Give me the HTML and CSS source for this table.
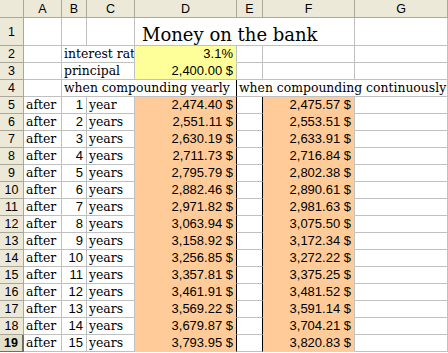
FILE: index.html
```html
<!DOCTYPE html>
<html>
<head>
<meta charset="utf-8">
<link rel="stylesheet" href="styles.css">
</head>
<body>
<div class="sheet">
  <div class="hd corner"></div><div class="hd">A</div><div class="hd">B</div><div class="hd">C</div><div class="hd">D</div><div class="hd">E</div><div class="hd">F</div><div class="hd">G</div>

  <div class="rh">1</div><div class="c"></div><div class="c"></div><div class="c"></div><div class="c title span3">Money on the bank</div><div class="c"></div>

  <div class="rh">2</div><div class="c"></div><div class="c t span2">interest rat</div><div class="c n yel top">3.1%</div><div class="c"></div><div class="c"></div><div class="c"></div>

  <div class="rh">3</div><div class="c"></div><div class="c t span2">principal</div><div class="c n yel">2,400.00 $</div><div class="c"></div><div class="c"></div><div class="c"></div>

  <div class="rh">4</div><div class="c"></div><div class="c t span3 bk">when compounding yearly</div><div class="c t span3 vis">when compounding continuously</div>

  <div class="rh">5</div><div class="c t">after</div><div class="c n">1</div><div class="c t">year</div><div class="c n org bk">2,474.40 $</div><div class="c bk"></div><div class="c n org">2,475.57 $</div><div class="c"></div>
  <div class="rh">6</div><div class="c t">after</div><div class="c n">2</div><div class="c t">years</div><div class="c n org bk">2,551.11 $</div><div class="c bk"></div><div class="c n org">2,553.51 $</div><div class="c"></div>
  <div class="rh">7</div><div class="c t">after</div><div class="c n">3</div><div class="c t">years</div><div class="c n org bk">2,630.19 $</div><div class="c bk"></div><div class="c n org">2,633.91 $</div><div class="c"></div>
  <div class="rh">8</div><div class="c t">after</div><div class="c n">4</div><div class="c t">years</div><div class="c n org bk">2,711.73 $</div><div class="c bk"></div><div class="c n org">2,716.84 $</div><div class="c"></div>
  <div class="rh">9</div><div class="c t">after</div><div class="c n">5</div><div class="c t">years</div><div class="c n org bk">2,795.79 $</div><div class="c bk"></div><div class="c n org">2,802.38 $</div><div class="c"></div>
  <div class="rh">10</div><div class="c t">after</div><div class="c n">6</div><div class="c t">years</div><div class="c n org bk">2,882.46 $</div><div class="c bk"></div><div class="c n org">2,890.61 $</div><div class="c"></div>
  <div class="rh">11</div><div class="c t">after</div><div class="c n">7</div><div class="c t">years</div><div class="c n org bk">2,971.82 $</div><div class="c bk"></div><div class="c n org">2,981.63 $</div><div class="c"></div>
  <div class="rh">12</div><div class="c t">after</div><div class="c n">8</div><div class="c t">years</div><div class="c n org bk">3,063.94 $</div><div class="c bk"></div><div class="c n org">3,075.50 $</div><div class="c"></div>
  <div class="rh">13</div><div class="c t">after</div><div class="c n">9</div><div class="c t">years</div><div class="c n org bk">3,158.92 $</div><div class="c bk"></div><div class="c n org">3,172.34 $</div><div class="c"></div>
  <div class="rh">14</div><div class="c t">after</div><div class="c n">10</div><div class="c t">years</div><div class="c n org bk">3,256.85 $</div><div class="c bk"></div><div class="c n org">3,272.22 $</div><div class="c"></div>
  <div class="rh">15</div><div class="c t">after</div><div class="c n">11</div><div class="c t">years</div><div class="c n org bk">3,357.81 $</div><div class="c bk"></div><div class="c n org">3,375.25 $</div><div class="c"></div>
  <div class="rh">16</div><div class="c t">after</div><div class="c n">12</div><div class="c t">years</div><div class="c n org bk">3,461.91 $</div><div class="c bk"></div><div class="c n org">3,481.52 $</div><div class="c"></div>
  <div class="rh">17</div><div class="c t">after</div><div class="c n">13</div><div class="c t">years</div><div class="c n org bk">3,569.22 $</div><div class="c bk"></div><div class="c n org">3,591.14 $</div><div class="c"></div>
  <div class="rh">18</div><div class="c t">after</div><div class="c n">14</div><div class="c t">years</div><div class="c n org bk">3,679.87 $</div><div class="c bk"></div><div class="c n org">3,704.21 $</div><div class="c"></div>
  <div class="rh sel">19</div><div class="c t">after</div><div class="c n">15</div><div class="c t">years</div><div class="c n org bk">3,793.95 $</div><div class="c bk"></div><div class="c n org">3,820.83 $</div><div class="c"></div>
</div>
</body>
</html>
```

FILE: styles.css
```css
html, body {
  margin: 0;
  padding: 0;
  background: #ffffff;
}

.sheet {
  display: grid;
  grid-template-columns: 24px 38px 25px 48px 102px 26px 92px 93px;
  grid-template-rows: 18px 28px repeat(18, 17px);
  width: 448px;
  overflow: hidden;
}

.sheet > div {
  box-sizing: border-box;
  border-right: 1px solid #c0c0c0;
  border-bottom: 1px solid #c0c0c0;
  display: flex;
  align-items: flex-end;
  overflow: hidden;
  white-space: nowrap;
  color: #000;
}

.sheet > .hd,
.sheet > .rh {
  background: #ece9d8;
  border-right-color: #aca899;
  border-bottom-color: #aca899;
  justify-content: center;
  align-items: center;
  font-family: "Liberation Sans", Arial, sans-serif;
  font-size: 12.5px;
  line-height: 14px;
}

.sheet > .rh.sel {
  font-weight: bold;
  background: #e2dfcb;
  border-right: 2px solid #716f64;
  border-bottom-color: #716f64;
}

.t {
  font-family: "DejaVu Serif", serif;
  font-size: 12.4px;
  line-height: 16px;
  padding-left: 2px;
}

.n {
  font-family: "Liberation Sans", Arial, sans-serif;
  font-size: 13px;
  line-height: 16px;
  justify-content: flex-end;
  padding-right: 3px;
}

.title {
  font-family: "DejaVu Serif", serif;
  font-size: 18px;
  line-height: 21px;
  padding-left: 7px;
}

.span2 { grid-column: span 2; }
.span3 { grid-column: span 3; }

.sheet > .vis { overflow: visible; }

.sheet > .yel { background: #ffff99; }
.sheet > .yel.top { border-bottom-color: #ffff99; }

.sheet > .org {
  background: #ffcc99;
  border-bottom-color: #ffcc99;
}

.sheet > .bk { border-right-color: #000000; }
```
